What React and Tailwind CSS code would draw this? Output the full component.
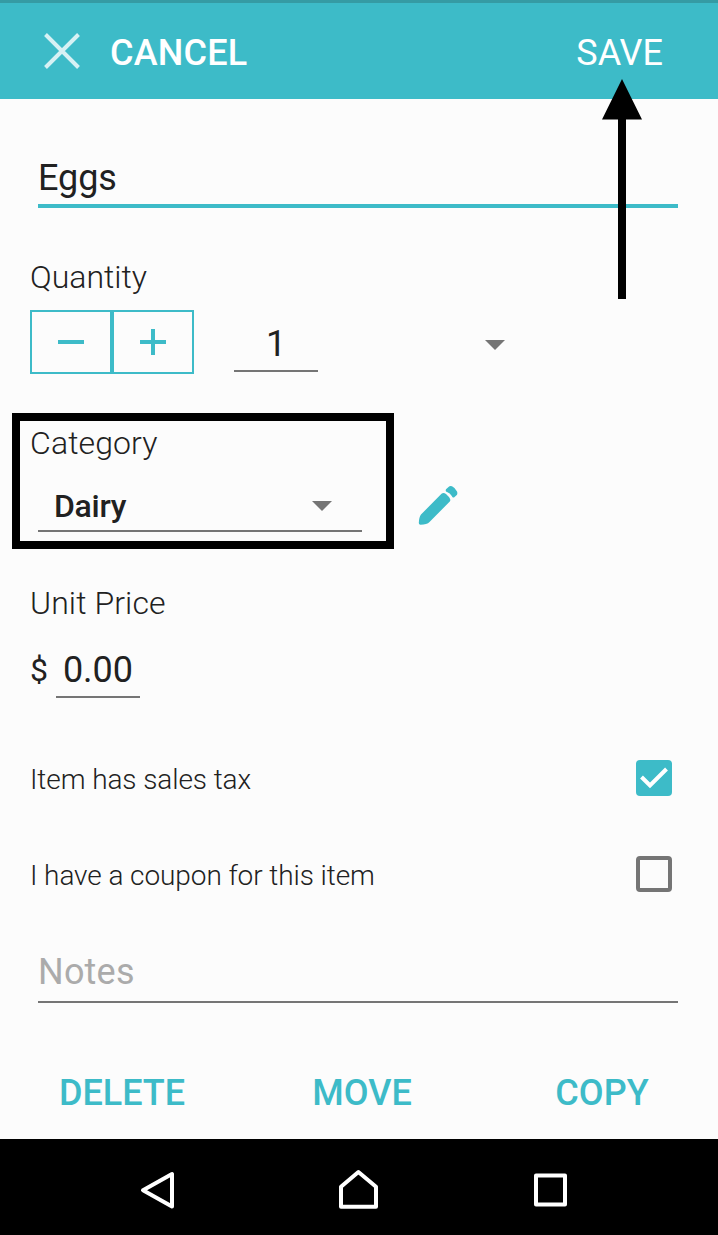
import { useState } from 'react';

function Caret({ className }) {
    return (
        <svg viewBox="0 0 20 10" className={`w-5 h-2.5 fill-[#757575] ${className}`}>
            <path d="M0 0h20L10 10z" />
        </svg>
    );
}

function CheckRow({ label, checked, onChange }) {
    return (
        <div className="h-24 flex items-center justify-between pl-[30px] pr-[46px]">
            <span className="text-[28px] leading-[28px] font-light pt-1 tracking-[-0.09px]">{label}</span>
            <button type="button" onClick={onChange} className="size-9">
                {checked ? (
                    <svg viewBox="0 0 36 36" className="size-9">
                        <rect width="36" height="36" rx="4" fill="#3dbbc8" />
                        <path d="M5.5 17L14 25.500L30.500 9" fill="none" stroke="#fff" strokeWidth="4" />
                    </svg>
                ) : (
                    <div className="size-9 border-4 border-[#757575] rounded-[4px]" />
                )}
            </button>
        </div>
    );
}

export default function App() {
    const [name, setName] = useState('Eggs');
    const [quantity, setQuantity] = useState(1);
    const [price, setPrice] = useState('0.00');
    const [notes, setNotes] = useState('');
    const [hasTax, setHasTax] = useState(true);
    const [hasCoupon, setHasCoupon] = useState(false);

    return (
        <div className="relative w-[718px] h-[1235px] overflow-hidden flex flex-col bg-[#fcfcfc] text-[#212121] font-[Roboto,sans-serif]">
            {/* Header */}
            <div className="h-[3px] bg-[#359ba4]" />
            <header className="h-24 flex items-center bg-[#3dbbc8] text-white text-[36px] leading-[36px] pl-11 pr-[55px]">
                <svg viewBox="0 0 36 36" className="size-9 text-[#d6f1f4]">
                    <path d="M1.500 1.500L34.500 34.500M34.500 1.500L1.500 34.500" fill="none" stroke="currentColor" strokeWidth="4" />
                </svg>
                <button type="button" className="ml-[30px] pt-1 font-medium tracking-[0.2px]">CANCEL</button>
                <button type="button" className="ml-auto pt-1">SAVE</button>
            </header>

            {/* Item name */}
            <input
                value={name}
                onChange={(e) => setName(e.target.value)}
                className="mt-[61px] mx-[38px] w-[640px] h-12 pb-2 border-b-4 border-[#3dbbc8] text-[36px] leading-[36px] tracking-[-0.1px] outline-none"
            />

            {/* Quantity */}
            <div className="mt-[53px] pl-[30px]">
                <label className="block text-[32px] leading-[32px] font-light">Quantity</label>
                <div className="mt-[17px] flex items-start">
                    <button type="button" onClick={() => setQuantity(Math.max(1, quantity - 1))} className="w-[82px] h-16 border-2 border-[#3dbbc8] flex items-center justify-center">
                        <svg viewBox="0 0 26 26" className="size-[26px] fill-[#3dbbc8]">
                            <path d="M0 11h26v4H0z" />
                        </svg>
                    </button>
                    <button type="button" onClick={() => setQuantity(quantity + 1)} className="w-[82px] h-16 border-2 border-[#3dbbc8] flex items-center justify-center">
                        <svg viewBox="0 0 26 26" className="size-[26px] fill-[#3dbbc8]">
                            <path d="M0 11h26v4H0zM11 0h4v26h-4z" />
                        </svg>
                    </button>
                    <div className="ml-10 mt-4 w-[84px] h-[46px] border-b-2 border-[#757575] text-center text-[36px] leading-[36px]">{quantity}</div>
                    <Caret className="ml-[167px] mt-[30px]" />
                </div>
            </div>

            {/* Category */}
            <div className="mt-[53px] pl-[30px]">
                <label className="block text-[32px] leading-[32px] font-light tracking-[0.1px]">Category</label>
                <div className="mt-[27px] pl-2 flex items-start">
                    <div className="mt-1 w-[324px] h-[42px] pl-4 pr-[30px] flex items-start justify-between border-b-2 border-[#757575]">
                        <span className="text-[32px] leading-[32px] font-medium tracking-[-0.3px]">Dairy</span>
                        <Caret className="mt-[11px]" />
                    </div>
                    <svg viewBox="0 0 40 40" className="ml-14 size-10 fill-[#3dbbc8]">
                        <path d="M23.500 7.800Q25.500 6.300 28 8L31 11Q33.200 14 31.800 15.500L11.500 36Q9 38.700 2.500 38.700Q0.800 38.700 0.800 37Q1 31 3 28.500Z" />
                        <path d="M28 3.200L30.500 1Q32 -0.500 34 0.300Q37.500 2 39 5.500Q39.800 7.500 38.800 9L36 11.500Q34.500 12 33.800 10Q32 7 29 6Q27 5.300 28 3.200Z" />
                    </svg>
                </div>
            </div>

            {/* Unit price */}
            <div className="mt-[55px] pl-[30px]">
                <label className="block text-[32px] leading-[32px] font-light tracking-[0.1px]">Unit Price</label>
                <div className="mt-[33px] flex items-start">
                    <span className="w-[26px] mt-0.5 text-[32px] leading-[32px]">$</span>
                    <input
                        value={price}
                        onChange={(e) => setPrice(e.target.value)}
                        className="w-[84px] h-[46px] pb-2 border-b-2 border-[#757575] text-center text-[36px] leading-[36px] outline-none"
                    />
                </div>
            </div>

            <div className="mt-8">
                <CheckRow label="Item has sales tax" checked={hasTax} onChange={() => setHasTax(!hasTax)} />
                <CheckRow label="I have a coupon for this item" checked={hasCoupon} onChange={() => setHasCoupon(!hasCoupon)} />
            </div>

            <input
                value={notes}
                onChange={(e) => setNotes(e.target.value)}
                placeholder="Notes"
                className="mt-8 mx-[38px] w-[640px] h-[49px] pb-[11px] border-b-2 border-[#757575] text-[36px] leading-[36px] tracking-[0.2px] placeholder:text-[#ababab] outline-none"
            />

            {/* Actions */}
            <div className="mt-[72px] h-16 shrink-0 flex items-start pl-0.5 text-[36px] leading-[36px] font-medium text-[#3dbbc8]">
                <button type="button" className="w-[240px] shrink-0">DELETE</button>
                <button type="button" className="w-[240px] shrink-0">MOVE</button>
                <button type="button" className="w-[240px] shrink-0">COPY</button>
            </div>

            {/* Navigation bar */}
            <nav className="h-24 shrink-0 bg-black flex items-center pl-[138px] pt-[7px]">
                <svg viewBox="0 0 40 44" className="w-10 h-11" fill="none" stroke="#fff" strokeWidth="4" strokeLinejoin="round">
                    <path d="M34 5V37.500L5 21.200Z" />
                </svg>
                <svg viewBox="0 0 44 44" className="w-11 h-11 ml-[158px]" fill="none" stroke="#fff" strokeWidth="4" strokeLinejoin="round">
                    <path d="M5 37.700V17.700L22.400 3L40 17.700V37.700Z" />
                </svg>
                <svg viewBox="0 0 40 44" className="w-10 h-11 ml-[150px]" fill="none" stroke="#fff" strokeWidth="4" strokeLinejoin="round">
                    <path d="M6 6.500H35V35.500H6Z" />
                </svg>
            </nav>

            {/* Callouts */}
            <div className="absolute left-3 top-[413px] w-[382px] h-[136px] border-8 border-black pointer-events-none" />
            <svg viewBox="0 0 40 220" className="absolute left-[602px] top-[79px] w-10 h-[220px] pointer-events-none">
                <path d="M20 0L40 40.500H24V220H16V40.500H0z" />
            </svg>
        </div>
    );
}
